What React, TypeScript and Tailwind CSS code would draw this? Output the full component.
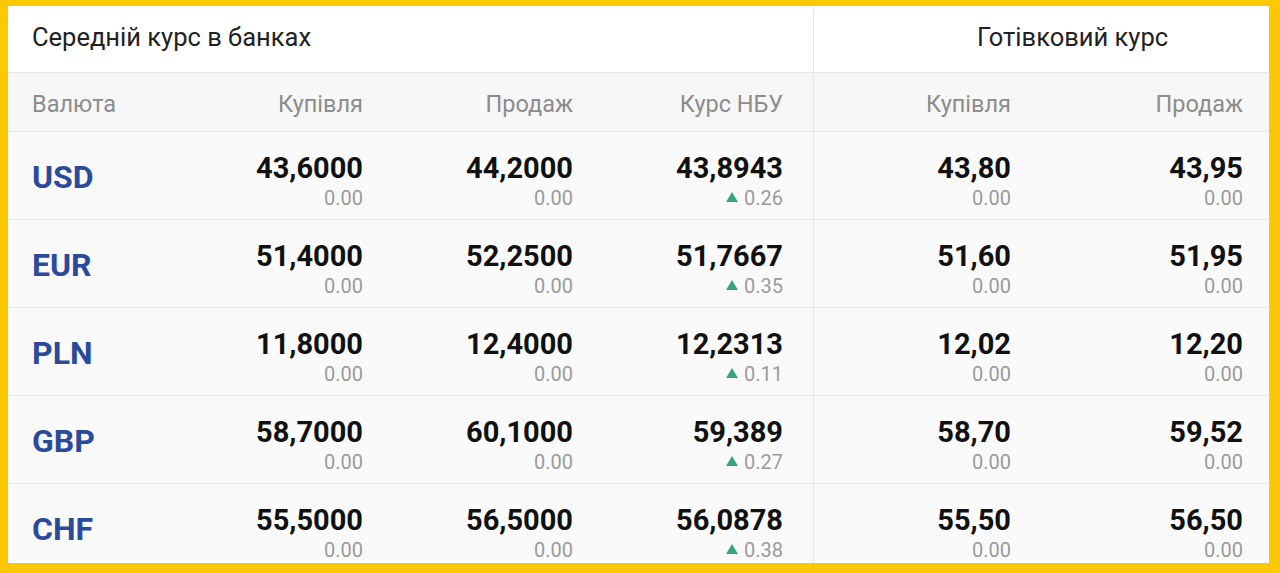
type Cell = { value: string; delta: string; up?: boolean };

interface Row {
  code: string;
  cells: Cell[];
}

const rows: Row[] = [
  {
    code: "USD",
    cells: [
      { value: "43,6000", delta: "0.00" },
      { value: "44,2000", delta: "0.00" },
      { value: "43,8943", delta: "0.26", up: true },
      { value: "43,80", delta: "0.00" },
      { value: "43,95", delta: "0.00" },
    ],
  },
  {
    code: "EUR",
    cells: [
      { value: "51,4000", delta: "0.00" },
      { value: "52,2500", delta: "0.00" },
      { value: "51,7667", delta: "0.35", up: true },
      { value: "51,60", delta: "0.00" },
      { value: "51,95", delta: "0.00" },
    ],
  },
  {
    code: "PLN",
    cells: [
      { value: "11,8000", delta: "0.00" },
      { value: "12,4000", delta: "0.00" },
      { value: "12,2313", delta: "0.11", up: true },
      { value: "12,02", delta: "0.00" },
      { value: "12,20", delta: "0.00" },
    ],
  },
  {
    code: "GBP",
    cells: [
      { value: "58,7000", delta: "0.00" },
      { value: "60,1000", delta: "0.00" },
      { value: "59,389", delta: "0.27", up: true },
      { value: "58,70", delta: "0.00" },
      { value: "59,52", delta: "0.00" },
    ],
  },
  {
    code: "CHF",
    cells: [
      { value: "55,5000", delta: "0.00" },
      { value: "56,5000", delta: "0.00" },
      { value: "56,0878", delta: "0.38", up: true },
      { value: "55,50", delta: "0.00" },
      { value: "56,50", delta: "0.00" },
    ],
  },
];

const headers = ["Купівля", "Продаж", "Курс НБУ", "Купівля", "Продаж"];

// right padding + divider per value column (index 0..4)
const colCls = [
  "pr-[30px]",
  "pr-[30px]",
  "pr-[30px]",
  "pr-[30px] border-l border-[#e6e6e6]",
  "pr-[26px]",
];

function UpTriangle() {
  return (
    <svg width="12" height="10" viewBox="0 0 12 10" className="mr-[6px] mb-[2px]">
      <polygon points="6,0 12,10 0,10" fill="#3ba37e" />
    </svg>
  );
}

export default function App() {
  return (
    <div
      className="box-border h-[573px] w-[1280px] overflow-hidden border-t-[6px] border-b-[10px] border-l-[8px] border-r-[11px] border-[#fcc900] bg-[#fafafa]"
      style={{ fontFamily: "Roboto, 'Noto Sans', sans-serif" }}
    >
      <div className="grid grid-cols-[175px_210px_210px_210px_228px_1fr]">
        {/* title row */}
        <div className="col-span-4 flex h-[67px] items-center border-b border-[#e6e6e6] bg-white pb-[3px] pl-[24px] text-[25.5px] text-[#222]">
          Середній курс в банках
        </div>
        <div className="col-span-2 flex h-[67px] items-center border-b border-l border-[#e6e6e6] bg-white pb-[3px] pl-[163px] text-[25.5px] text-[#222]">
          Готівковий курс
        </div>

        {/* column headers */}
        <div className="flex h-[59px] items-center border-b border-[#e6e6e6] bg-[#f7f7f7] pt-[5px] pl-[24px] text-[23.5px] text-[#8c8c8c]">
          Валюта
        </div>
        {headers.map((h, i) => (
          <div
            key={i}
            className={`flex h-[59px] items-center justify-end border-b border-[#e6e6e6] bg-[#f7f7f7] pt-[5px] text-[23.5px] text-[#8c8c8c] ${colCls[i]}`}
          >
            {h}
          </div>
        ))}

        {/* data rows */}
        {rows.map((r) => (
          <div key={r.code} className="contents">
            <div className="flex h-[88px] items-center border-b border-[#e6e6e6] pt-[2px] pl-[24px] text-[32px] font-bold text-[#2a4b9b]">
              {r.code}
            </div>
            {r.cells.map((c, i) => (
              <div
                key={i}
                className={`flex h-[88px] flex-col items-end justify-center border-b border-[#e6e6e6] pt-[12px] ${colCls[i]}`}
              >
                <span className="text-[29px] leading-[30px] font-bold text-[#111]">{c.value}</span>
                <span className="mt-[3px] flex items-center text-[20px] leading-[24px] text-[#9a9a9a]">
                  {c.up && <UpTriangle />}
                  {c.delta}
                </span>
              </div>
            ))}
          </div>
        ))}
      </div>
    </div>
  );
}
